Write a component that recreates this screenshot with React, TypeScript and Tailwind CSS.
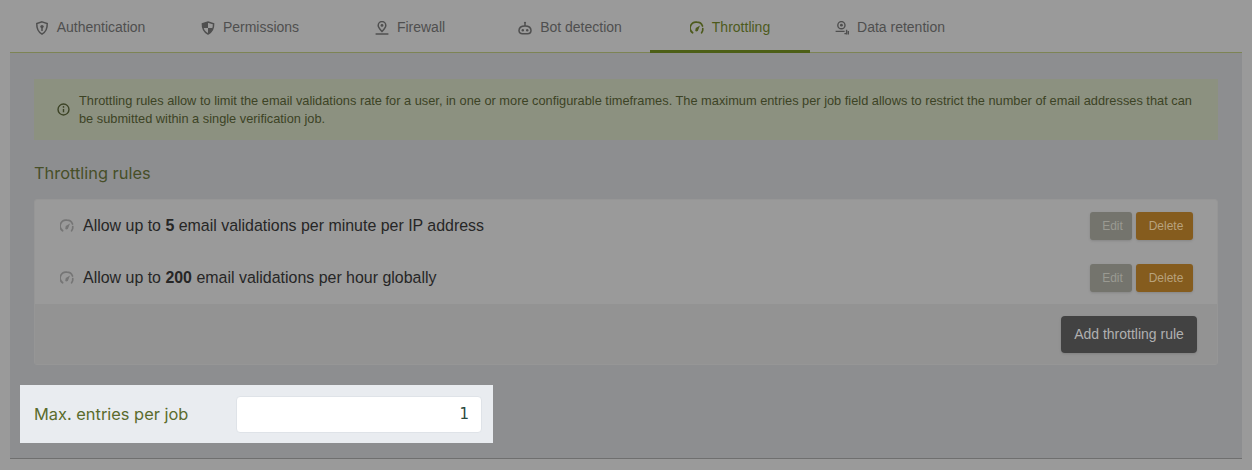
import { ReactNode } from "react";

const sans = "font-['Liberation_Sans',Arial,sans-serif]";
const heading = "font-['Inter',sans-serif]";

type IconProps = { className?: string };

function ShieldKey({ className }: IconProps) {
	return (
		<svg viewBox="0 0 14 14" className={className} fill="none" stroke="currentColor" strokeWidth="1.5">
			<path d="M7 0.9 L12.2 2.6 C12.4 7.5 10.8 11 7 13.1 C3.2 11 1.6 7.5 1.8 2.6 Z" />
			<circle cx="7" cy="5.6" r="1.7" fill="currentColor" stroke="none" />
			<path d="M7 6.5 V10" />
		</svg>
	);
}

function ShieldHalf({ className }: IconProps) {
	return (
		<svg viewBox="0 0 14 14" className={className} fill="none" stroke="currentColor" strokeWidth="1.5">
			<path d="M7 1 L12.6 2.8 C12.8 7.5 11 11 7 13 C3 11 1.2 7.5 1.4 2.8 Z" />
			<path d="M7 1 L1.4 2.8 C1.4 4.5 1.6 5.7 2.1 7 H7 Z M7 7 H11.9 C11.2 9.6 9.6 11.7 7 13 Z" fill="currentColor" stroke="none" />
		</svg>
	);
}

function PinLine({ className }: IconProps) {
	return (
		<svg viewBox="0 0 14 14" className={className} fill="none" stroke="currentColor" strokeWidth="1.5">
			<path d="M7 10.4 C5 8.2 3.2 6.4 3.2 4.4 A3.8 3.8 0 0 1 10.8 4.4 C10.8 6.4 9 8.2 7 10.4 Z" />
			<circle cx="7" cy="4.4" r="1.4" fill="currentColor" stroke="none" />
			<path d="M0.6 13 H13.4" />
		</svg>
	);
}

function Robot({ className }: IconProps) {
	return (
		<svg viewBox="0 0 14 14" className={className} fill="none" stroke="currentColor" strokeWidth="1.5">
			<path d="M1 9.6 C1 6.8 3.4 5 7 5 C10.6 5 13 6.8 13 9.6 C13 11.6 11.6 12.8 9.6 12.8 H4.4 C2.4 12.8 1 11.6 1 9.6 Z" />
			<path d="M7 5 V2.6" />
			<circle cx="7" cy="1.8" r="1.1" fill="currentColor" stroke="none" />
			<circle cx="4.8" cy="9.2" r="1.2" fill="currentColor" stroke="none" />
			<circle cx="9.2" cy="9.2" r="1.2" fill="currentColor" stroke="none" />
		</svg>
	);
}

function Gauge({ className }: IconProps) {
	return (
		<svg viewBox="0 0 14 14" className={className} fill="none" stroke="currentColor" strokeWidth="1.7">
			<path d="M2.6 11.8 A5.9 5.9 0 0 1 7 1.2 A5.9 5.9 0 0 1 12.5 5" strokeLinecap="round" />
			<path d="M12.8 7.6 A5.9 5.9 0 0 1 11.6 11.8" strokeLinecap="round" />
			<path d="M5.2 9.8 L5.8 7 L10 4.4 L8.2 9 A1.7 1.7 0 0 1 5.2 9.8 Z" fill="currentColor" stroke="none" />
		</svg>
	);
}

function DataPin({ className }: IconProps) {
	return (
		<svg viewBox="0 0 14 14" className={className} fill="none" stroke="currentColor" strokeWidth="1.4">
			<circle cx="6.4" cy="4.2" r="3.6" />
			<circle cx="6.4" cy="4.2" r="1.4" fill="currentColor" stroke="none" />
			<path d="M0.6 10.4 H9.6 M11.6 8.8 V13.6 M13.4 10 V13.6 M9.4 12.6 H11.4" />
		</svg>
	);
}

function InfoCircle({ className }: IconProps) {
	return (
		<svg viewBox="0 0 14 14" className={className} fill="none" stroke="currentColor" strokeWidth="1.5">
			<circle cx="7" cy="7" r="5.9" />
			<path d="M7 6.4 V10" />
			<circle cx="7" cy="4.2" r="0.9" fill="currentColor" stroke="none" />
		</svg>
	);
}

const tabs: { label: string; icon: (p: IconProps) => ReactNode; active?: boolean }[] = [
	{ label: "Authentication", icon: ShieldKey },
	{ label: "Permissions", icon: ShieldHalf },
	{ label: "Firewall", icon: PinLine },
	{ label: "Bot detection", icon: Robot },
	{ label: "Throttling", icon: Gauge, active: true },
	{ label: "Data retention", icon: DataPin },
];

const rules = [
	{ before: "Allow up to ", value: "5", after: " email validations per minute per IP address" },
	{ before: "Allow up to ", value: "200", after: " email validations per hour globally" },
];

export default function App() {
	return (
		<div className={`${sans} w-[1252px] h-[470px] overflow-hidden bg-[#9a9a9a] px-[10px]`}>
			<div className="flex h-[53px] border-b border-[#7d8455]">
				{tabs.map((tab) => {
					const Icon = tab.icon;
					return (
						<div
							key={tab.label}
							className={`flex h-[53px] w-[160px] items-center justify-center gap-[8px] text-[14px] ${
								tab.active ? "border-b-[3px] border-[#4d5f17] pt-[5px] text-[#4d5a1c]" : "pt-[2px] text-[#4f4f4f]"
							}`}
						>
							<Icon className="h-[14px] w-[14px]" />
							<span>{tab.label}</span>
						</div>
					);
				})}
			</div>

			<div className="h-[406px] border-b border-[#6f6f6f] bg-[#8d8e90] px-[24px] pt-[26px]">
				<div className="flex h-[61px] items-center gap-[9px] bg-[#8c9180] pl-[23px] pr-[20px] text-[12.8px] leading-[18px] text-[#3c4325]">
					<InfoCircle className="h-[13px] w-[13px] shrink-0" />
					<p>
						Throttling rules allow to limit the email validations rate for a user, in one or more configurable timeframes. The
						maximum entries per job field allows to restrict the number of email addresses that can be submitted within a single
						verification job.
					</p>
				</div>

				<h2 className={`${heading} mt-[21px] h-[24px] text-[16.4px] leading-[24px] text-[#474f28]`}>Throttling rules</h2>

				<div className="mt-[14px] rounded-[3px] border border-[#969696] bg-[#9a9a9a]">
					{rules.map((rule) => (
						<div key={rule.value} className="flex h-[52px] items-center pl-[25px] pr-[24px]">
							<Gauge className="h-[14px] w-[14px] text-[#757575]" />
							<p className="ml-[9px] flex-1 text-[15.95px] text-[#262626]">
								{rule.before}
								<b>{rule.value}</b>
								{rule.after}
							</p>
							<button className="h-[28px] w-[42px] rounded-[3px] bg-[#74746d] pl-[3px] text-[12px] text-[#9a9a92] shadow-sm">Edit</button>
							<button className="ml-[4px] h-[28px] w-[57px] rounded-[3px] bg-[#855c1e] pl-[3px] text-[12px] text-[#b8a27c] shadow-sm">Delete</button>
						</div>
					))}
					<div className="flex h-[60px] items-center justify-end bg-[#939393] pr-[20px]">
						<button className="h-[37px] w-[136px] rounded-[4px] bg-[#424242] text-[14px] text-[#b0b0b0] shadow-sm">Add throttling rule</button>
					</div>
				</div>

				<div className="-ml-[14px] mt-[20px] flex h-[58px] w-[473px] items-center justify-between bg-[#e9ecf0] pl-[14px] pr-[11px]">
					<label className={`${heading} pt-[1px] text-[16.4px] text-[#5a6b2c]`}>Max. entries per job</label>
					<input
						readOnly
						value="1"
						className="h-[37px] w-[246px] rounded-[4px] border border-[#dfe3e8] bg-white px-[12px] text-right font-['DejaVu_Sans',sans-serif] text-[15px] text-[#2c4a3e] outline-none"
					/>
				</div>
			</div>
		</div>
	);
}
